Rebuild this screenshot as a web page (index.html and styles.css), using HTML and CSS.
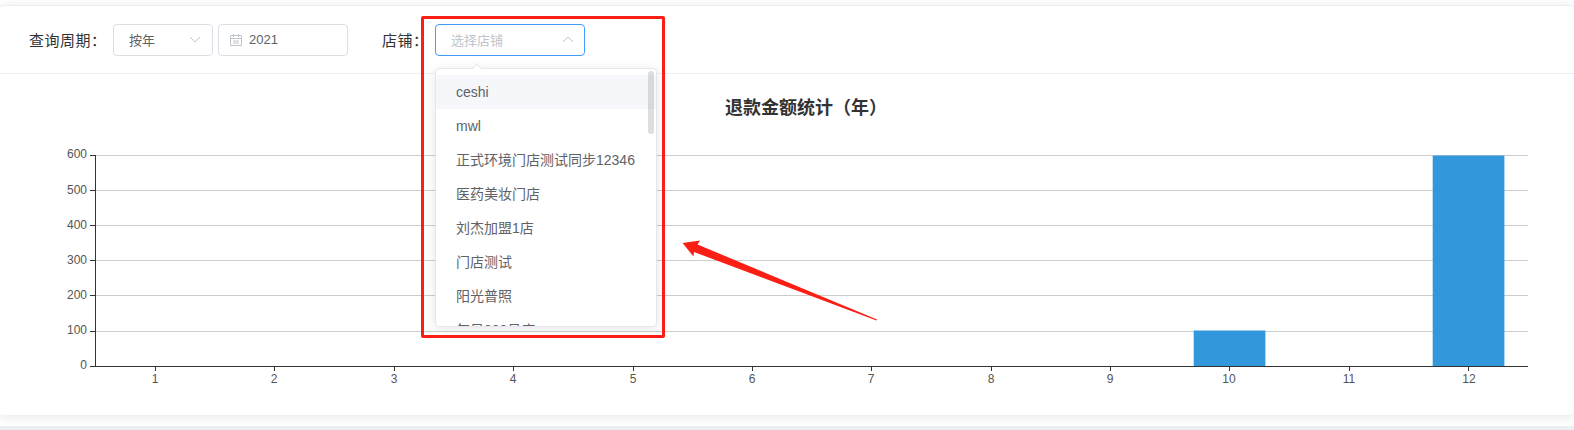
FILE: index.html
```html
<!DOCTYPE html>
<html lang="zh-CN">
<head>
    <meta charset="UTF-8">
    <title>退款金额统计</title>
    <link rel="stylesheet" href="styles.css">
</head>
<body>
    <div class="card">
        <!-- Filter bar -->
        <div class="filter-bar">
            <span class="filter-label">查询周期：</span>
            <div class="field field-period">
                <span>按年</span>
                <svg class="chevron" viewBox="0 0 12 7"><path d="M1 1l5 5 5-5"/></svg>
            </div>
            <div class="field field-date">
                <svg class="calendar" viewBox="0 0 12 12"><path d="M.5 1.5h11v10H.5zM.5 4.5h11M3.5 0v3M8.5 0v3M3 7h6M3 9h6"/></svg>
                <span>2021</span>
            </div>
            <span class="filter-label label-shop">店铺：</span>
            <div class="field field-shop">
                <span>选择店铺</span>
                <svg class="chevron" viewBox="0 0 12 7"><path d="M1 6l5-5 5 5"/></svg>
            </div>
        </div>

        <!-- Chart -->
        <div class="chart">
            <svg class="chart-svg" width="1574" height="341" viewBox="0 74 1574 341">
                <text class="chart-title" x="806" y="114">退款金额统计（年）</text>

                <g class="grid">
                    <path d="M95 155.5H1528M95 190.5H1528M95 225.5H1528M95 260.5H1528M95 295.5H1528M95 331.5H1528"/>
                </g>

                <rect class="bar" x="1193.7" y="330.5" width="71.7" height="36"/>
                <rect class="bar" x="1432.7" y="155.5" width="71.7" height="211"/>

                <g class="axis">
                    <path d="M95.5 155V366M90 155.5H95M90 190.5H95M90 225.5H95M90 260.5H95M90 295.5H95M90 331.5H95M90 366.5H1528"/>
                    <path d="M155.5 366V371M274.5 366V371M394.5 366V371M513.5 366V371M633.5 366V371M752.5 366V371M871.5 366V371M991.5 366V371M1110.5 366V371M1229.5 366V371M1349.5 366V371M1468.5 366V371"/>
                </g>

                <g class="y-labels">
                    <text x="87" y="158">600</text>
                    <text x="87" y="194">500</text>
                    <text x="87" y="229">400</text>
                    <text x="87" y="264">300</text>
                    <text x="87" y="299">200</text>
                    <text x="87" y="334">100</text>
                    <text x="87" y="369">0</text>
                </g>
                <g class="x-labels">
                    <text x="155" y="383">1</text>
                    <text x="274" y="383">2</text>
                    <text x="394" y="383">3</text>
                    <text x="513" y="383">4</text>
                    <text x="633" y="383">5</text>
                    <text x="752" y="383">6</text>
                    <text x="871" y="383">7</text>
                    <text x="991" y="383">8</text>
                    <text x="1110" y="383">9</text>
                    <text x="1229" y="383">10</text>
                    <text x="1349" y="383">11</text>
                    <text x="1469" y="383">12</text>
                </g>
            </svg>
        </div>
    </div>
    <div class="page-strip"></div>

    <!-- Shop dropdown -->
    <div class="dropdown">
        <ul class="dropdown-list">
            <li class="active">ceshi</li>
            <li>mwl</li>
            <li>正式环境门店测试同步12346</li>
            <li>医药美妆门店</li>
            <li>刘杰加盟1店</li>
            <li>门店测试</li>
            <li>阳光普照</li>
            <li>每日300号店</li>
        </ul>
        <div class="scroll-thumb"></div>
    </div>
    <div class="dropdown-caret"></div>

    <!-- Red annotation -->
    <div class="mark-box"></div>
    <svg class="mark-arrow" width="1574" height="430" viewBox="0 0 1574 430">
        <polygon points="682.5,243 700,240.5 697.5,244.5 877,319.5 876.5,320.5 694,252 693.5,256.5"/>
    </svg>
</body>
</html>
```

FILE: styles.css
```css
* {
    box-sizing: border-box;
}
html, body {
    height: 430px;
}
body {
    margin: 0;
    padding-top: 5px;
    overflow: hidden;
    background: #fff;
    color: #606266;
    font-family: "Liberation Sans", "Noto Sans CJK SC", sans-serif;
    font-size: 14px;
}
.card {
    height: 410px;
    background: #fff;
    border-top: 1px solid #ebeef5;
    border-radius: 4px;
    box-shadow: 0 2px 12px rgba(0, 0, 0, 0.1);
}
.page-strip {
    height: 4px;
    margin-top: 11px;
    background: #ebeff3;
}
.filter-bar {
    display: flex;
    align-items: center;
    height: 68px;
    padding: 0 0 0 29px;
    border-bottom: 1px solid #ebeef5;
}
.filter-label {
    width: 84px;
    color: #303133;
    font-family: "Noto Sans CJK JP", sans-serif;
    font-size: 15px;
    letter-spacing: 0.5px;
    white-space: nowrap;
}
.label-shop {
    width: 53px;
    margin-left: 34px;
}
.field {
    display: flex;
    align-items: center;
    height: 32px;
    background: #fff;
    border: 1px solid #dcdfe6;
    border-radius: 4px;
    font-size: 13px;
}
.field-period {
    justify-content: space-between;
    width: 100px;
    padding: 0 11px 0 15px;
}
.field-date {
    width: 130px;
    margin-left: 5px;
    padding-left: 11px;
}
.field-shop {
    justify-content: space-between;
    width: 150px;
    padding: 0 10px 0 15px;
    border-color: #409eff;
    color: #c0c4cc;
}
.chevron {
    width: 12px;
    height: 7px;
    fill: none;
    stroke: #c0c4cc;
    stroke-width: 1;
}
.calendar {
    width: 12px;
    height: 12px;
    margin-right: 7px;
    fill: none;
    stroke: #c0c4cc;
    stroke-width: 1;
}
.chart-svg {
    display: block;
}
.chart-svg text {
    font-family: "Liberation Sans", "Noto Sans CJK SC", sans-serif;
}
.chart-title {
    fill: #333;
    font-size: 18px;
    font-weight: 700;
    text-anchor: middle;
}
.grid path {
    fill: none;
    stroke: #ccc;
}
.axis path {
    fill: none;
    stroke: #333;
}
.bar {
    fill: #3398db;
}
.y-labels text {
    fill: #555;
    font-size: 12px;
    text-anchor: end;
}
.x-labels text {
    fill: #555;
    font-size: 12px;
    text-anchor: middle;
}
.dropdown {
    position: absolute;
    top: 68px;
    left: 435px;
    width: 222px;
    height: 259px;
    overflow: hidden;
    background: #fff;
    border: 1px solid #e4e7ed;
    border-radius: 4px;
    box-shadow: 0 2px 12px rgba(0, 0, 0, 0.1);
}
.dropdown-list {
    margin: 0;
    padding: 6px 0 0;
    list-style: none;
}
.dropdown-list li {
    height: 34px;
    padding: 0 20px;
    line-height: 34px;
    white-space: nowrap;
}
.dropdown-list .active {
    background: #f5f7fa;
}
.scroll-thumb {
    position: absolute;
    top: 2px;
    right: 2px;
    width: 6px;
    height: 63px;
    background: rgba(144, 147, 153, 0.3);
    border-radius: 3px;
}
.dropdown-caret {
    position: absolute;
    top: 65px;
    left: 473px;
    width: 8px;
    height: 8px;
    background: #fff;
    border-top: 1px solid #e4e7ed;
    border-left: 1px solid #e4e7ed;
    transform: rotate(45deg);
}
.mark-box {
    position: absolute;
    top: 16px;
    left: 421px;
    width: 244px;
    height: 322px;
    border: 3px solid #fa1e14;
    border-radius: 2px;
}
.mark-arrow {
    position: absolute;
    top: 0;
    left: 0;
    fill: #fa1e14;
}
```
